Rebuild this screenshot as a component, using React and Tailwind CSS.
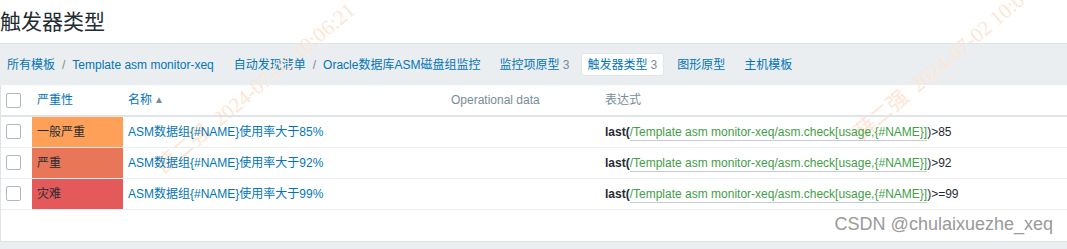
import React from "react";

const font = { fontFamily: '"Liberation Sans", Arial, "Noto Sans CJK SC", sans-serif' };

const triggers = [
    { severity: "一般严重", color: "bg-[#ffa059]", name: "ASM数据组{#NAME}使用率大于85%", op: ">85" },
    { severity: "严重", color: "bg-[#e97659]", name: "ASM数据组{#NAME}使用率大于92%", op: ">92" },
    { severity: "灾难", color: "bg-[#e45959]", name: "ASM数据组{#NAME}使用率大于99%", op: ">=99" },
];

const Checkbox = () => (
    <span className="block w-[15px] h-[15px] border border-[#acbbc2] rounded-[2px] bg-white" />
);

// faint diagonal watermark over the page
const Watermark = ({ className }) => (
    <div
        className={`absolute pointer-events-none whitespace-pre text-[21px] text-[#fde6d4] origin-bottom-left -rotate-[40deg] ${className}`}
        style={{ fontFamily: '"Liberation Serif", "Noto Sans CJK SC", serif' }}
    >
        薛二强  2024-07-02 10:06:21
    </div>
);

const App = () => {
    return (
        <div className="relative w-full h-[249px] overflow-hidden bg-white text-[12px] text-[#1f2c33]" style={font}>
            <h1 className="h-[43px] flex items-center text-[21px] text-[#1f2c33]">触发器类型</h1>

            <nav className="h-[42px] flex items-center bg-[#ebeef0] border-t border-[#dfe4e7] pl-[7px]">
                <a className="text-[#0275b8]">所有模板</a>
                <span className="mx-[7px] text-[#768d99]">/</span>
                <a className="text-[#0275b8]">Template asm monitor-xeq</a>
                <a className="ml-[20px] text-[#0275b8]">自动发现清单</a>
                <span className="mx-[7px] text-[#768d99]">/</span>
                <a className="text-[#0275b8]">Oracle数据库ASM磁盘组监控</a>
                <a className="ml-[19px] text-[#0275b8]">
                    监控项原型 <span className="text-[#768d99]">3</span>
                </a>
                <span className="ml-[12px] px-[6px] h-[21px] flex items-center bg-white rounded-[2px] shadow-[0_0_0_1px_#e2e6e9] text-[#0275b8]">
                    触发器类型 <span className="ml-[3px] text-[#768d99]">3</span>
                </span>
                <a className="ml-[14px] text-[#0275b8]">图形原型</a>
                <a className="ml-[19px] text-[#0275b8]">主机模板</a>
            </nav>

            <Watermark className="left-[170px] top-[150px]" />
            <Watermark className="left-[868px] top-[116px]" />

            <div className="relative border-l border-[#dfe4e7] h-[156px]">
                <table className="w-full border-collapse table-fixed">
                    <colgroup>
                        <col className="w-[31px]" />
                        <col className="w-[91px]" />
                        <col className="w-[323px]" />
                        <col className="w-[154px]" />
                        <col />
                    </colgroup>
                    <thead>
                        <tr className="h-[31px] border-b-2 border-[#dfe4e7] text-left">
                            <th className="pl-[5px] font-normal">
                                <Checkbox />
                            </th>
                            <th className="pl-[5px] font-normal text-[#0275b8]">严重性</th>
                            <th className="pl-[5px] font-normal text-[#0275b8]">
                                名称
                                <span className="ml-[2px] text-[10px] text-[#768d99] align-[1px]">▲</span>
                            </th>
                            <th className="pl-[5px] font-normal text-[#768d99]">Operational data</th>
                            <th className="pl-[5px] font-normal text-[#768d99]">表达式</th>
                        </tr>
                    </thead>
                    <tbody>
                        {triggers.map((t) => (
                            <tr key={t.name} className="h-[31px] border-b border-[#ebeef0]">
                                <td className="pl-[5px]">
                                    <Checkbox />
                                </td>
                                <td className={`pl-[5px] ${t.color}`}>{t.severity}</td>
                                <td className="pl-[5px] text-[#0275b8]">{t.name}</td>
                                <td className="pl-[5px]" />
                                <td className="pl-[5px] whitespace-nowrap">
                                    <b>last(</b>
                                    <span className="text-[#429e47] border-b border-[#c5ccd1] pb-[1px]">
                                        /Template asm monitor-xeq/asm.check[usage,{"{#NAME}"}]
                                    </span>
                                    <span>){t.op}</span>
                                </td>
                            </tr>
                        ))}
                    </tbody>
                </table>
            </div>
            <div className="h-[8px] bg-[#ebeef0] border-t border-[#dfe4e7]" />

            <div className="absolute right-[14px] top-[211px] text-[18px] text-[#9a9a9a] pointer-events-none">
                CSDN @chulaixuezhe_xeq
            </div>
        </div>
    );
};

export default App;
